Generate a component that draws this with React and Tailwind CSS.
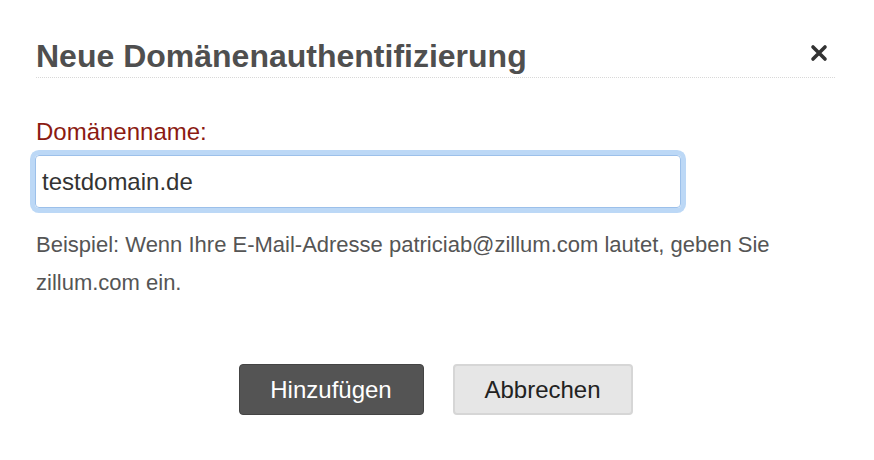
import React from "react";

export default function App() {
  return (
    <div className="w-[874px] h-[460px] bg-white pl-[36px] pr-[39px] pt-[38px]" style={{ fontFamily: '"Liberation Sans", Arial, sans-serif' }}>
      <div className="flex items-start justify-between border-b border-dotted border-[#d8d8d8] pb-[3px]">
        <h1 className="text-[32px] leading-[36px] font-bold text-[#4f4f4f]">Neue Domänenauthentifizierung</h1>
        <button className="mr-[7px] mt-[6px] block" aria-label="close">
          <svg className="block" width="18" height="18" viewBox="0 0 18 18">
            <path d="M3 3 L15 15 M15 3 L3 15" stroke="#333" strokeWidth="3.6" strokeLinecap="round" />
          </svg>
        </button>
      </div>
      <div className="mt-[40px] text-[24px] leading-[28px] text-[#8b1a12]">Domänenname:</div>
      <div className="mt-[9px] w-[646px] rounded-[4px] ring-[5px] ring-[#bcd8f6] border border-[#9cc0ea] h-[53px] flex items-center pl-[6px] ml-[-1px]">
        <span className="text-[24px] text-[#333]">testdomain.de</span>
      </div>
      <p className="mt-[18px] text-[22px] leading-[38px] text-[#555] w-[790px]">
        Beispiel: Wenn Ihre E-Mail-Adresse patriciab@zillum.com lautet, geben Sie zillum.com ein.
      </p>
      <div className="mt-[62px] flex justify-center gap-[29px]">
        <button className="w-[185px] h-[51px] rounded-[4px] bg-[#545454] border border-[#444] text-white text-[24px]">Hinzufügen</button>
        <button className="w-[180px] h-[51px] rounded-[4px] bg-[#e6e6e6] border-2 border-[#d6d6d6] text-[#222] text-[24px]">Abbrechen</button>
      </div>
    </div>
  );
}
